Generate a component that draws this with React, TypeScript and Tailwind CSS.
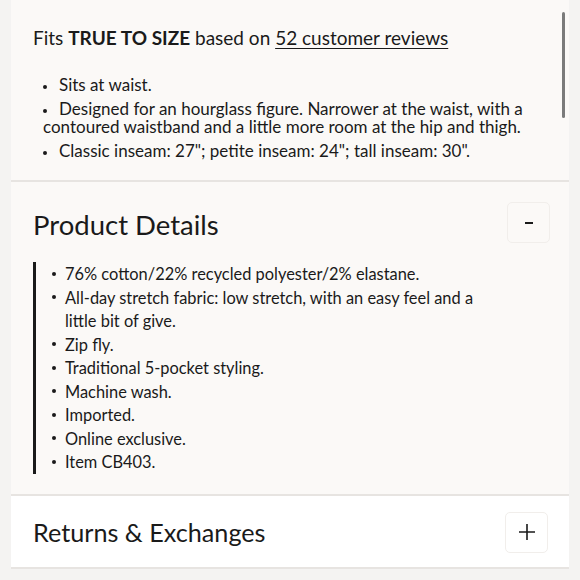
import React from 'react';

const fitNotes = [
  'Sits at waist.',
  'Designed for an hourglass figure. Narrower at the waist, with a contoured waistband and a little more room at the hip and thigh.',
  'Classic inseam: 27"; petite inseam: 24"; tall inseam: 30".',
];

const details = [
  '76% cotton/22% recycled polyester/2% elastane.',
  'All-day stretch fabric: low stretch, with an easy feel and a little bit of give.',
  'Zip fly.',
  'Traditional 5-pocket styling.',
  'Machine wash.',
  'Imported.',
  'Online exclusive.',
  'Item CB403.',
];

function ToggleButton({ open }: { open: boolean }) {
  return (
    <button className="w-[43px] h-[41px] flex items-center justify-center border border-[#f1eeeb] rounded-[5px] bg-transparent">
      {open ? (
        <svg width="10" height="4" viewBox="0 0 10 4">
          <rect x="1" y="1" width="8" height="2" fill="#1a1a1a" />
        </svg>
      ) : (
        <svg width="20" height="20" viewBox="0 0 20 20" fill="none" stroke="#1a1a1a" strokeWidth="1.6">
          <path d="M10 2v16M2 10h16" />
        </svg>
      )}
    </button>
  );
}

const Dot = () => <span className="inline-block w-[4px] h-[4px] rounded-full bg-[#1a1a1a] align-middle" />;

export default function App() {
  return (
    <div className="w-[580px] h-[580px] overflow-hidden bg-[#f4f3f2] px-[11px] text-[#1a1a1a] font-['Lato',sans-serif]">
      <div className="relative">
        {/* scrollbar */}
        <div className="absolute right-[4px] top-[12px] w-[3px] h-[106px] rounded-full bg-[#7b7b7b]" />

        {/* Fit section */}
        <section className="bg-[#fbf9f7] pl-[22px] pr-[19px] pt-[26px] pb-[20px] border-b-2 border-[#e7e4e1]">
          <p className="text-[19px] leading-[24px]">
            Fits <span className="font-bold">TRUE TO SIZE</span> based on{' '}
            <span className="underline underline-offset-[3px] decoration-1">52 customer reviews</span>
          </p>
          <ul className="mt-[26px] pl-[10px] flex flex-col gap-[6px] text-[17px] leading-[18px]">
            {fitNotes.map(n => (
              <li key={n}>
                <Dot />
                <span className="ml-[12px]">{n}</span>
              </li>
            ))}
          </ul>
        </section>

        {/* Product Details */}
        <section className="bg-[#fbf9f7] pl-[22px] pr-[19px] pt-[20px] pb-[20px] border-b-2 border-[#e7e4e1]">
          <div className="flex items-center justify-between">
            <h2 className="text-[27.5px] leading-[32px] translate-y-[2px]">Product Details</h2>
            <ToggleButton open />
          </div>
          <ul className="mt-[19px] border-l-[3px] border-[#1a1a1a] pl-[16px] text-[16.4px] leading-[23.5px]">
            {details.map(d => (
              <li key={d} className="flex">
                <span className="w-[13px] shrink-0 flex items-center h-[23.5px]">
                  <span className="w-[4px] h-[4px] rounded-full bg-[#1a1a1a]" />
                </span>
                <span className="max-w-[430px]">{d}</span>
              </li>
            ))}
          </ul>
        </section>

        {/* Returns */}
        <section className="bg-white pl-[22px] pr-[21px] pt-[16px] pb-[14px] border-b-2 border-[#e7e4e1]">
          <div className="flex items-center justify-between">
            <h2 className="text-[25.2px] leading-[32px]">Returns &amp; Exchanges</h2>
            <ToggleButton open={false} />
          </div>
        </section>
      </div>
    </div>
  );
}
